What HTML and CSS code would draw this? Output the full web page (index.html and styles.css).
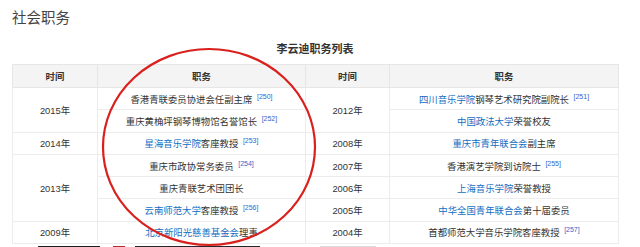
FILE: index.html
```html
<!DOCTYPE html>
<html lang="zh">
<head>
<meta charset="utf-8">
<link rel="stylesheet" href="styles.css">
</head>
<body>
<div class="page">
  <h2 class="title">社会职务</h2>
  <div class="caption">李云迪职务列表</div>
  <table class="duty">
    <colgroup>
      <col class="c-time1"><col class="c-duty1"><col class="c-time2"><col class="c-duty2">
    </colgroup>
    <thead>
      <tr><th>时间</th><th>职务</th><th>时间</th><th>职务</th></tr>
    </thead>
    <tbody>
      <tr>
        <td rowspan="2">2015年</td>
        <td>香港青联委员协进会任副主席 <sup>[250]</sup></td>
        <td rowspan="2">2012年</td>
        <td><a>四川音乐学院</a>钢琴艺术研究院副院长 <sup>[251]</sup></td>
      </tr>
      <tr>
        <td>重庆黄桷坪钢琴博物馆名誉馆长 <sup>[252]</sup></td>
        <td><a>中国政法大学</a>荣誉校友</td>
      </tr>
      <tr>
        <td>2014年</td>
        <td><a>星海音乐学院</a>客座教授 <sup>[253]</sup></td>
        <td>2008年</td>
        <td><a>重庆市青年联合会</a>副主席</td>
      </tr>
      <tr>
        <td rowspan="3">2013年</td>
        <td>重庆市政协常务委员 <sup>[254]</sup></td>
        <td>2007年</td>
        <td>香港演艺学院到访院士 <sup>[255]</sup></td>
      </tr>
      <tr>
        <td>重庆青联艺术团团长</td>
        <td>2006年</td>
        <td><a>上海音乐学院</a>荣誉教授</td>
      </tr>
      <tr>
        <td><a>云南师范大学</a>客座教授 <sup>[256]</sup></td>
        <td>2005年</td>
        <td><a>中华全国青年联合会</a>第十届委员</td>
      </tr>
      <tr>
        <td>2009年</td>
        <td><a>北京新阳光慈善基金会</a>理事</td>
        <td>2004年</td>
        <td>首都师范大学音乐学院客座教授 <sup>[257]</sup></td>
      </tr>
    </tbody>
  </table>
  <div class="strip">
    <span class="blk b1"></span>
    <span class="blk b2"></span>
    <span class="blk b3"></span>
    <span class="blk b4"></span>
  </div>
  <svg class="annot" width="640" height="247" viewBox="0 0 640 247">
    <ellipse cx="209" cy="147" rx="106" ry="98" fill="none" stroke="#d9201c" stroke-width="2.2"/>
  </svg>
</div>
</body>
</html>
```

FILE: styles.css
```css
html, body {
  margin: 0;
  padding: 0;
  background: #fff;
  overflow: hidden;
}
.page {
  position: relative;
  width: 640px;
  height: 247px;
  overflow: hidden;
  padding-left: 12px;
  box-sizing: border-box;
  font-family: "Liberation Sans", "Noto Sans CJK SC", sans-serif;
  color: #333;
}
.title {
  margin: 0;
  padding-top: 11px;
  font-size: 14.5px;
  line-height: 15px;
  font-weight: normal;
  color: #444;
}
.caption {
  margin-top: 16px;
  width: 606px;
  text-align: center;
  font-size: 11px;
  line-height: 14px;
  font-weight: bold;
  color: #333;
}
.duty {
  margin-top: 8px;
  width: 606px;
  border-collapse: collapse;
  table-layout: fixed;
  border: 1px solid #e6e6e6;
  font-size: 9.4px;
}
.c-time1 { width: 85px; }
.c-duty1 { width: 208px; }
.c-time2 { width: 84px; }
.c-duty2 { width: 229px; }
.duty th {
  height: 22px;
  padding: 0;
  background: #f4f4f4;
  border: 1px solid #e6e6e6;
  font-weight: bold;
  color: #333;
  text-align: center;
}
.duty td {
  height: 21.3px;
  padding: 0;
  border: 1px solid #ececec;
  text-align: center;
  color: #333;
  white-space: nowrap;
}
.duty a {
  color: #136ec2;
  text-decoration: none;
}
.duty sup {
  font-size: 7px;
  color: #3366cc;
  vertical-align: 4px;
  line-height: 0;
  margin-left: 2px;
}
.strip {
  position: relative;
  height: 10px;
  margin-top: 2px;
}
.blk {
  position: absolute;
  top: 0;
  height: 10px;
}
.b1 { left: 26px; width: 62px; background: #1e1e1e; }
.b2 { left: 101px; width: 12px; background: #b52a2a; }
.b3 { left: 123px; width: 125px; background: #262626; }
.b4 { left: 308px; width: 56px; background: #dcdcdc; }
.annot {
  position: absolute;
  left: 0;
  top: 0;
  pointer-events: none;
}
```
